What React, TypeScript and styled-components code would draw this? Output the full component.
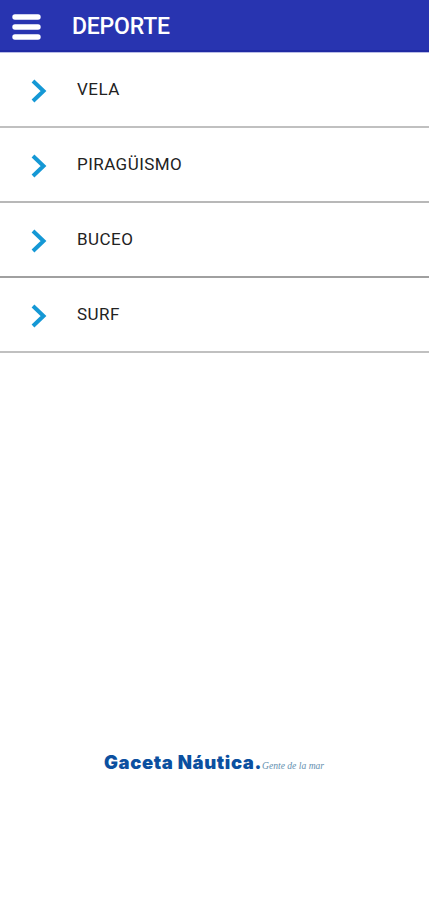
import React from "react";
import styled, { createGlobalStyle } from "styled-components";

const GlobalStyle = createGlobalStyle`
  * { box-sizing: border-box; }
  body { margin: 0; background: #fff; font-family: Roboto, sans-serif; }
`;
const Page = styled.div`
  display: flex;
  flex-direction: column;
  width: 100%;
  height: 900px;
  overflow: hidden;
`;
const Header = styled.header`
  display: flex;
  align-items: center;
  height: 53px;
  flex: none;
  padding-left: 12px;
  gap: 31px;
  background: #2834b0;
  border-bottom: 1px solid #b9bce6;
  box-shadow: inset 0 -2px #202aa3;
  color: #fff;
`;
const Title = styled.h1`
  margin: 0;
  padding-top: 2px;
  font-size: 23px;
  letter-spacing: -0.2px;
  font-weight: 500;
  line-height: 50px;
`;
const MenuIcon = styled.svg`
  margin-top: 1px;
`;
const List = styled.ul`
  list-style: none;
  margin: 0;
  padding: 0;
`;
const Row = styled.li<{ $line: string }>`
  display: flex;
  align-items: center;
  height: 75px;
  padding-left: 31px;
  gap: 30px;
  border-bottom: 2px solid ${(p) => p.$line};
  font-size: 17px;
  letter-spacing: 0.45px;
  color: #222;
`;
const Label = styled.span`
  padding-bottom: 2px;
`;
const Chevron = styled.svg`
  margin-top: 3px;
`;
const Footer = styled.footer`
  display: flex;
  align-items: baseline;
  margin-top: auto;
  padding: 0 0 122px 104px;
  white-space: nowrap;
`;
const Brand = styled.span`
  font: 900 18.5px/24px Inter, sans-serif;
  letter-spacing: 0.6px;
  color: #0b50a0;
`;
const Tagline = styled.span`
  font: italic 9.6px/24px "Liberation Serif", serif;
  color: #6590b0;
`;

const sections = [
  { name: "VELA", line: "#c0c0c0" },
  { name: "PIRAGÜISMO", line: "#b8b8b8" },
  { name: "BUCEO", line: "#a0a0a0" },
  { name: "SURF", line: "#c0c0c0" },
];

export default function App() {
  return (
    <Page>
      <GlobalStyle />
      <Header>
        <MenuIcon width="29" height="26" viewBox="0 0 29 26" stroke="#fff" strokeWidth="5.4" strokeLinecap="round">
          <path d="M3 3H26M3 13H26M3 23H26" />
        </MenuIcon>
        <Title>DEPORTE</Title>
      </Header>
      <List>
        {sections.map(({ name, line }) => (
          <Row key={name} $line={line}>
            <Chevron width="16" height="24" viewBox="0 0 16 24" fill="none" stroke="#1598d5" strokeWidth="4">
              <path d="M2 2L12.5 12L2 22" />
            </Chevron>
            <Label>{name}</Label>
          </Row>
        ))}
      </List>
      <Footer>
        <Brand>Gaceta Náutica.</Brand>
        <Tagline>Gente de la mar</Tagline>
      </Footer>
    </Page>
  );
}
